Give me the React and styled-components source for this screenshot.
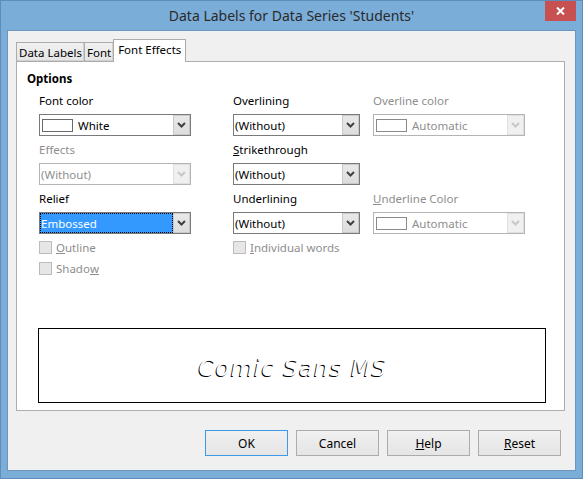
import React from 'react';
import styled, { createGlobalStyle } from 'styled-components';

const Global = createGlobalStyle`
  html, body { margin: 0; padding: 0; }
  body {
    width: 583px; height: 479px; overflow: hidden;
    font-family: "Noto Sans", "Open Sans", sans-serif;
    font-size: 11.5px; color: #000;
  }
  * { box-sizing: border-box; }
`;

const Window = styled.div`
  width: 583px; height: 479px;
  background: #7badd9;
  border: 1px solid #5f8cba;
  padding: 0 6px 7px 6px;
  display: flex; flex-direction: column;
`;

const TitleBar = styled.div`
  height: 29px;
  display: grid;
  grid-template-columns: 1fr auto 1fr;
  align-items: start;
`;

const Title = styled.div`
  grid-column: 2;
  align-self: center;
  font-size: 14px;
  color: #2a2a2a;
  white-space: nowrap;
`;

const CloseBtn = styled.div`
  grid-column: 3;
  justify-self: end;
  width: 31px; height: 20px;
  background: #c75050;
  display: flex; align-items: center; justify-content: center;
`;

const Content = styled.div`
  flex: 1;
  background: #f0f0f0;
  border: 1px solid #6e95bb;
  padding: 8px 10px 14px 8px;
  display: flex; flex-direction: column;
`;

const TabRow = styled.div`
  display: flex;
  align-items: flex-end;
  height: 23px;
  margin-bottom: -1px;
`;

const Tab = styled.div`
  position: relative;
  z-index: ${p => (p.$active ? 1 : 0)};
  height: ${p => (p.$active ? '23px' : '20px')};
  padding: ${p => (p.$active ? '2px 4px 0 4px' : '0 2px')};
  margin-left: ${p => (p.$first ? '0' : '-1px')};
  border: 1px solid #acacac;
  border-bottom: ${p => (p.$active ? 'none' : '1px solid #acacac')};
  box-shadow: ${p => (p.$active ? 'none' : 'inset -1px -1px 0 #d0d0d0')};
  background: ${p => (p.$active ? '#fff' : 'linear-gradient(#f0f0f0, #e5e5e5)')};
  display: flex; align-items: ${p => (p.$active ? 'flex-start' : 'center')};
  white-space: nowrap;
`;

const Panel = styled.div`
  flex: 1;
  background: #fff;
  border: 1px solid #adadad;
  padding: 9px 0 7px 10px;
  display: flex; flex-direction: column;
`;

const SectionTitle = styled.div`
  font-weight: bold;
  line-height: 16px;
`;

const Fields = styled.div`
  margin: 5px 0 0 12px;
  display: grid;
  grid-template-columns: 194px 140px 152px;
  row-gap: 5px;
`;

const Field = styled.div`
  display: flex; flex-direction: column;
  grid-column: ${p => p.$col};
`;

const Label = styled.div`
  height: 18px; line-height: 18px;
  margin-bottom: 4px;
  color: ${p => (p.$disabled ? '#8e8e8e' : '#000')};
  white-space: nowrap;
`;

const Key = styled.span`
  text-decoration: underline;
`;

const Select = styled.div`
  width: ${p => p.$w}px;
  height: 22px;
  border: 1px solid ${p => (p.$disabled ? '#b4b4b4' : '#7a7a7a')};
  background: #fff;
  display: flex;
`;

const Value = styled.div`
  flex: 1;
  display: flex; align-items: center;
  padding-left: 1px;
  background: ${p => (p.$selected ? '#3399ff' : 'transparent')};
  outline: ${p => (p.$selected ? '1px dotted #000' : 'none')};
  outline-offset: -1px;
  color: ${p => (p.$selected ? '#fff' : p.$disabled ? '#8e8e8e' : '#000')};
  white-space: nowrap;
  overflow: hidden;
`;

const Swatch = styled.span`
  width: 31px; height: 13px;
  margin: 0 5px 0 1px;
  border: 1px solid ${p => (p.$disabled ? '#8a8a8a' : '#6a6a6a')};
  background: #fff;
  flex: none;
`;

const ArrowBtn = styled.div`
  width: 17px;
  border: 1px solid ${p => (p.$disabled ? '#e0e0e0' : '#c9c9c9')};
  background: ${p => (p.$disabled ? '#f0f0f0' : 'linear-gradient(#e8e8e8, #dddddd)')};
  display: flex; align-items: center; justify-content: center;
`;

const CheckRow = styled.div`
  grid-column: ${p => p.$col};
  display: flex; flex-direction: column;
  gap: 8px;
  margin-top: 2px;
`;

const Check = styled.div`
  display: flex; align-items: center;
  height: 13px;
  color: #8e8e8e;
  white-space: nowrap;
`;

const Box = styled.span`
  width: 13px; height: 13px;
  border: 1px solid #bcbcbc;
  background: #e6e6e6;
  margin-right: 4px;
  flex: none;
`;

const Preview = styled.div`
  margin: auto 0 0 11px;
  width: 508px; height: 75px;
  border: 1px solid #000;
  background: #fff;
  display: flex; align-items: center; justify-content: center;
`;

const PreviewText = styled.div`
  font-family: "DejaVu Sans", sans-serif;
  font-style: oblique;
  font-size: 23px;
  letter-spacing: 1px;
  color: #fff;
  text-shadow: -1px 1px 0 #000;
  margin-left: 2px;
  margin-top: 4px;
`;

const ButtonRow = styled.div`
  margin-top: 19px;
  display: flex; justify-content: flex-end;
  gap: 8px;
  padding-right: 4px;
`;

const Button = styled.div`
  width: 83px; height: 26px;
  border: 1px solid ${p => (p.$default ? '#3c9ae8' : '#acacac')};
  background: linear-gradient(#f0f0f0, #e5e5e5);
  display: flex; align-items: center; justify-content: center;
  font-size: 12px;
`;

const Chevron = ({ disabled }) => (
  <svg width="9" height="6" viewBox="0 0 9 6">
    <path d="M1 1 L4.5 4.5 L8 1" fill="none" stroke={disabled ? '#c8c8c8' : '#404040'} strokeWidth="2" />
  </svg>
);

const Dropdown = ({ w, value, swatch, disabled, selected }) => (
  <Select $w={w} $disabled={disabled}>
    <Value $disabled={disabled} $selected={selected}>
      {swatch && <Swatch $disabled={disabled} />}
      {value}
    </Value>
    <ArrowBtn $disabled={disabled}>
      <Chevron disabled={disabled} />
    </ArrowBtn>
  </Select>
);

export default function App() {
  return (
    <>
      <Global />
      <Window>
        <TitleBar>
          <Title>Data Labels for Data Series 'Students'</Title>
          <CloseBtn>
            <svg width="9" height="8" viewBox="0 0 9 8">
              <path d="M1 0.5 L8 7.5 M8 0.5 L1 7.5" stroke="#fff" strokeWidth="2" />
            </svg>
          </CloseBtn>
        </TitleBar>
        <Content>
          <TabRow>
            <Tab $first>Data Labels</Tab>
            <Tab>Font</Tab>
            <Tab $active>Font Effects</Tab>
          </TabRow>
          <Panel>
            <SectionTitle>Options</SectionTitle>
            <Fields>
              <Field $col={1}>
                <Label>Font color</Label>
                <Dropdown w={152} value="White" swatch />
              </Field>
              <Field $col={2}>
                <Label>Overlining</Label>
                <Dropdown w={127} value="(Without)" />
              </Field>
              <Field $col={3}>
                <Label $disabled>Overline color</Label>
                <Dropdown w={152} value="Automatic" swatch disabled />
              </Field>

              <Field $col={1}>
                <Label $disabled>Effects</Label>
                <Dropdown w={152} value="(Without)" disabled />
              </Field>
              <Field $col={2}>
                <Label><Key>S</Key>trikethrough</Label>
                <Dropdown w={127} value="(Without)" />
              </Field>

              <Field $col={1}>
                <Label>Relief</Label>
                <Dropdown w={152} value="Embossed" selected />
              </Field>
              <Field $col={2}>
                <Label>Underlining</Label>
                <Dropdown w={127} value="(Without)" />
              </Field>
              <Field $col={3}>
                <Label $disabled><Key>U</Key>nderline Color</Label>
                <Dropdown w={152} value="Automatic" swatch disabled />
              </Field>

              <CheckRow $col={1}>
                <Check><Box /><Key>O</Key>utline</Check>
                <Check><Box />Shado<Key>w</Key></Check>
              </CheckRow>
              <CheckRow $col={2}>
                <Check><Box /><Key>I</Key>ndividual words</Check>
              </CheckRow>
            </Fields>
            <Preview>
              <PreviewText>Comic Sans MS</PreviewText>
            </Preview>
          </Panel>
          <ButtonRow>
            <Button $default>OK</Button>
            <Button>Cancel</Button>
            <Button><Key>H</Key>elp</Button>
            <Button><Key>R</Key>eset</Button>
          </ButtonRow>
        </Content>
      </Window>
    </>
  );
}
